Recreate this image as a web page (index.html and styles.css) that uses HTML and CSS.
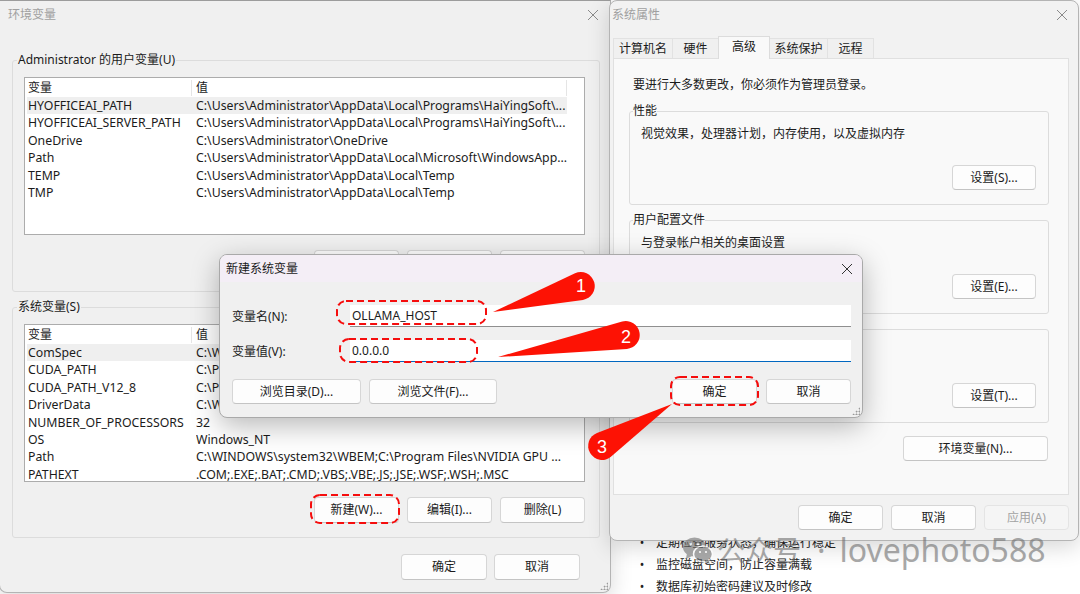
FILE: index.html
```html
<!DOCTYPE html>
<html lang="zh-CN">
<head>
  <meta charset="UTF-8">
  <title>环境变量</title>
  <link rel="stylesheet" href="styles.css">
</head>
<body>
  <!-- article text behind the windows -->
  <ul class="notes">
    <li>定期检查服务状态，确保运行稳定</li>
    <li>监控磁盘空间，防止容量满载</li>
    <li>数据库初始密码建议及时修改</li>
  </ul>

  <!-- 环境变量 -->
  <div class="win env-win">
    <div class="titlebar">
      <span>环境变量</span>
      <svg class="x" viewBox="0 0 10 10"><path d="M0 0L10 10M10 0L0 10"/></svg>
    </div>
    <div class="env-body">
      <div class="group">
        <div class="group-title">Administrator 的用户变量(U)</div>
        <div class="varlist">
          <div class="varhead"><span class="c1">变量</span><span class="c2">值</span></div>
          <div class="row hot"><span class="c1">HYOFFICEAI_PATH</span><span class="c2">C:\Users\Administrator\AppData\Local\Programs\HaiYingSoft\...</span></div>
          <div class="row"><span class="c1">HYOFFICEAI_SERVER_PATH</span><span class="c2">C:\Users\Administrator\AppData\Local\Programs\HaiYingSoft\...</span></div>
          <div class="row"><span class="c1">OneDrive</span><span class="c2">C:\Users\Administrator\OneDrive</span></div>
          <div class="row"><span class="c1">Path</span><span class="c2">C:\Users\Administrator\AppData\Local\Microsoft\WindowsApp...</span></div>
          <div class="row"><span class="c1">TEMP</span><span class="c2">C:\Users\Administrator\AppData\Local\Temp</span></div>
          <div class="row"><span class="c1">TMP</span><span class="c2">C:\Users\Administrator\AppData\Local\Temp</span></div>
        </div>
        <div class="btnrow">
          <button class="btn">新建(N)...</button>
          <button class="btn">编辑(E)...</button>
          <button class="btn">删除(D)</button>
        </div>
      </div>

      <div class="group">
        <div class="group-title">系统变量(S)</div>
        <div class="varlist">
          <div class="varhead"><span class="c1">变量</span><span class="c2">值</span></div>
          <div class="row hot"><span class="c1">ComSpec</span><span class="c2">C:\WINDOWS\system32\cmd.exe</span></div>
          <div class="row"><span class="c1">CUDA_PATH</span><span class="c2">C:\Program Files\NVIDIA GPU Computing Toolkit\CUDA\v12.8</span></div>
          <div class="row"><span class="c1">CUDA_PATH_V12_8</span><span class="c2">C:\Program Files\NVIDIA GPU Computing Toolkit\CUDA\v12.8</span></div>
          <div class="row"><span class="c1">DriverData</span><span class="c2">C:\Windows\System32\Drivers\DriverData</span></div>
          <div class="row"><span class="c1">NUMBER_OF_PROCESSORS</span><span class="c2">32</span></div>
          <div class="row"><span class="c1">OS</span><span class="c2">Windows_NT</span></div>
          <div class="row"><span class="c1">Path</span><span class="c2">C:\WINDOWS\system32\WBEM;C:\Program Files\NVIDIA GPU ...</span></div>
          <div class="row"><span class="c1">PATHEXT</span><span class="c2">.COM;.EXE;.BAT;.CMD;.VBS;.VBE;.JS;.JSE;.WSF;.WSH;.MSC</span></div>
        </div>
        <div class="btnrow">
          <button class="btn">新建(W)...</button>
          <button class="btn">编辑(I)...</button>
          <button class="btn">删除(L)</button>
        </div>
      </div>

      <div class="btnrow foot">
        <button class="btn wide">确定</button>
        <button class="btn wide">取消</button>
      </div>
    </div>
    <div class="grip"></div>
  </div>

  <!-- 系统属性 -->
  <div class="win sys-win">
    <div class="titlebar">
      <span>系统属性</span>
      <svg class="x" viewBox="0 0 10 10"><path d="M0 0L10 10M10 0L0 10"/></svg>
    </div>
    <div class="tabs">
      <span class="tab" style="width:60px">计算机名</span>
      <span class="tab" style="width:47px">硬件</span>
      <span class="tab on" style="width:52px">高级</span>
      <span class="tab" style="width:59px">系统保护</span>
      <span class="tab" style="width:47px">远程</span>
    </div>
    <div class="panel">
      <div class="intro">要进行大多数更改，你必须作为管理员登录。</div>

      <div class="group">
        <div class="group-title">性能</div>
        <div class="desc">视觉效果，处理器计划，内存使用，以及虚拟内存</div>
        <div class="btnrow"><button class="btn">设置(S)...</button></div>
      </div>

      <div class="group">
        <div class="group-title">用户配置文件</div>
        <div class="desc">与登录帐户相关的桌面设置</div>
        <div class="btnrow"><button class="btn">设置(E)...</button></div>
      </div>

      <div class="group">
        <div class="group-title">启动和故障恢复</div>
        <div class="desc">系统启动、系统故障和调试信息</div>
        <div class="btnrow"><button class="btn">设置(T)...</button></div>
      </div>

      <div class="btnrow env-btn"><button class="btn">环境变量(N)...</button></div>
    </div>
    <div class="btnrow sys-foot">
      <button class="btn">确定</button>
      <button class="btn">取消</button>
      <button class="btn" disabled>应用(A)</button>
    </div>
  </div>

  <!-- 新建系统变量 -->
  <div class="win new-var">
    <div class="titlebar">
      <span>新建系统变量</span>
      <svg class="x" viewBox="0 0 10 10"><path d="M0 0L10 10M10 0L0 10"/></svg>
    </div>
    <div class="nv-body">
      <div class="field">
        <label>变量名(N):</label>
        <div class="input">OLLAMA_HOST</div>
      </div>
      <div class="field">
        <label>变量值(V):</label>
        <div class="input focus">0.0.0.0</div>
      </div>
      <div class="btnrow nv-btns">
        <button class="btn browse" style="width:129px">浏览目录(D)...</button>
        <button class="btn browse" style="width:128px">浏览文件(F)...</button>
        <button class="btn ok">确定</button>
        <button class="btn">取消</button>
      </div>
    </div>
    <div class="grip"></div>
  </div>

  <!-- 公众号 watermark -->
  <div class="mark">
    <svg class="wx" viewBox="0 0 30 28">
      <ellipse cx="11.5" cy="11" rx="11.5" ry="9.5"/>
      <path d="M4 17l-1 6 6-3z"/>
      <ellipse cx="20" cy="18" rx="9.5" ry="8" stroke="#fff" stroke-width="1.5"/>
      <path d="M25 24l2 4-5-2z"/>
      <circle cx="7.5" cy="8" r="1.4" fill="#fff"/>
      <circle cx="15" cy="8" r="1.4" fill="#fff"/>
      <circle cx="17" cy="16" r="1.1" fill="#fff"/>
      <circle cx="23" cy="16" r="1.1" fill="#fff"/>
    </svg>
    <span class="mark-cn">公众号</span>
    <span class="mark-dot">·</span>
    <span>lovephoto588</span>
  </div>

  <!-- step markers drawn over the windows -->
  <svg class="marks" viewBox="0 0 1080 594">
    <g class="dash">
      <rect x="337" y="301" width="149" height="23" rx="9"/>
      <rect x="340" y="339" width="137" height="23" rx="9"/>
      <rect x="671" y="377" width="87" height="28" rx="9"/>
      <rect x="311" y="495" width="88" height="28" rx="9"/>
    </g>
    <g class="bubble">
      <path d="M493 312L575 273.3A14 14 0 1 1 582.9 299.9Z"/>
      <path d="M498 357L622.2 321.5A14 14 0 1 1 626.9 349Z"/>
      <path d="M672 404L611.2 456.6A14 14 0 1 1 597 432.9Z"/>
      <text x="581" y="292">1</text>
      <text x="626" y="343">2</text>
      <text x="602" y="453">3</text>
    </g>
  </svg>
</body>
</html>
```

FILE: styles.css
```css
* {
  box-sizing: border-box;
}

body {
  margin: 0;
  width: 1080px;
  height: 594px;
  position: relative;
  overflow: hidden;
  background: #fff;
  font-family: "Noto Sans", "Noto Sans CJK SC", sans-serif;
  font-size: 12px;
  line-height: 16px;
  color: #1b1b1b;
}

button {
  font: inherit;
  color: inherit;
}

/* page text under the windows */
.notes {
  position: absolute;
  left: 634px;
  top: 532px;
  margin: 0;
  padding: 0;
  list-style: none;
  color: #222;
  line-height: 22px;
}

.notes li::before {
  content: "•";
  display: inline-block;
  width: 16px;
  margin-right: 6px;
  text-align: center;
}

/* windows */
.win {
  position: absolute;
  background: #f0f0f0;
  border: 1px solid #b4b4b4;
  box-shadow: 0 6px 22px rgba(0, 0, 0, 0.16);
}

.titlebar {
  height: 27px;
  display: flex;
  align-items: center;
  justify-content: space-between;
  color: #a0a0a0;
}

.x {
  width: 10px;
  height: 10px;
  stroke: #8a8a8a;
  stroke-width: 1;
  fill: none;
}

.btnrow {
  display: flex;
  justify-content: flex-end;
  gap: 8px;
}

.btn {
  width: 85px;
  height: 26px;
  padding: 0;
  background: #fdfdfd;
  border: 1px solid #d6d6d6;
  border-bottom-color: #c4c4c4;
  border-radius: 4px;
  line-height: 22px;
  text-align: center;
  white-space: nowrap;
}

.btn[disabled] {
  background: #f5f5f5;
  border-color: #e4e4e4;
  color: #a3a3a3;
}

.group {
  border: 1px solid #dcdcdc;
  border-radius: 3px;
}

.group-title {
  width: fit-content;
  height: 16px;
  margin-top: -9px;
  background: #f0f0f0;
}

.grip {
  position: absolute;
  right: 2px;
  bottom: 2px;
  width: 8px;
  height: 8px;
  background: radial-gradient(circle, #9a9a9a 0.8px, transparent 1.2px) 0 0 / 3px 3px;
  clip-path: polygon(100% 0, 100% 100%, 0 100%);
}

/* 环境变量 */
.env-win {
  left: -1px;
  top: 0;
  width: 612px;
  height: 593px;
  border-radius: 0 0 8px 8px;
  border-top-color: #9c9c9c;
  z-index: 1;
}

.env-win .titlebar {
  padding: 0 12px 0 8px;
}

.env-body {
  padding: 32px 10px 0 12px;
}

.env-body .group {
  padding: 0 14px 14px 11px;
  margin-bottom: 15px;
}

.env-body .group:first-child {
  padding-bottom: 15px;
}

.env-body .group-title {
  margin-left: -7px;
  padding: 0 1px;
}

.varlist {
  height: 158px;
  margin-top: 9px;
  background: #fff;
  border: 1px solid #acacac;
  overflow: hidden;
}

.varhead,
.row {
  display: flex;
  margin: 0 17px 0 2px;
  white-space: nowrap;
}

.varhead {
  height: 19px;
  align-items: center;
}

.varhead .c1 {
  width: 165px;
  padding-left: 1px;
  border-right: 1px solid #e5e5e5;
}

.varhead .c2 {
  flex: 1;
  padding-left: 4px;
  border-right: 1px solid #e5e5e5;
}

.row {
  height: 17.4px;
  line-height: 17.4px;
  font-size: 12.3px;
}

.row.hot {
  background: #efefef;
}

.row .c1 {
  width: 169px;
  padding-left: 1px;
  flex-shrink: 0;
}

.row .c2 {
  flex: 1;
  overflow: hidden;
}

.env-body .btnrow {
  margin-top: 15px;
}

.env-body .foot {
  margin: 16px 20px 0 0;
  gap: 7px;
}

.btn.wide {
  width: 86px;
}

/* 系统属性 */
.sys-win {
  left: 609px;
  top: 0;
  width: 470px;
  height: 541px;
  border-radius: 8px;
  background: #f2f2f2;
  padding: 0 9px 0 3px;
  z-index: 2;
}

.sys-win .titlebar {
  margin: 0 -9px 0 -3px;
  padding: 0 11px 0 2px;
}

.tabs {
  display: flex;
  align-items: flex-end;
  height: 22px;
  margin-top: 8px;
}

.tab {
  height: 20px;
  line-height: 20px;
  text-align: center;
  background: #f0f0f0;
  border: 1px solid #e2e2e2;
  border-bottom: none;
  margin-right: -1px;
}

.tab.on {
  height: 23px;
  line-height: 19px;
  background: #f9f9f9;
  border-color: #dcdcdc;
  position: relative;
  z-index: 1;
  margin-bottom: -1px;
}

.panel {
  width: 456px;
  height: 437px;
  background: #f9f9f9;
  border: 1px solid #e0e0e0;
  padding: 18px 19px 0 15px;
}

.intro {
  margin-left: 4px;
}

.panel .group {
  margin-top: 15px;
  padding: 0 12px 14px 11px;
}

.intro + .group {
  margin-top: 18px;
}

.panel .group-title {
  margin-left: -8px;
  background: #f9f9f9;
}

.desc {
  margin-top: 7px;
}

.panel .group .btnrow {
  margin-top: 23px;
}

.panel .btn {
  width: 84px;
  height: 25px;
}

.env-btn {
  margin-top: 13px;
}

.panel .env-btn .btn {
  width: 145px;
  margin-right: 1px;
}

.sys-foot {
  margin-top: 10px;
}

.sys-foot .btn {
  height: 25px;
}

/* 新建系统变量 */
.new-var {
  left: 219px;
  top: 254px;
  width: 644px;
  height: 164px;
  border-radius: 8px;
  border-color: #a9a9a9;
  overflow: hidden;
  box-shadow: 0 8px 28px rgba(0, 0, 0, 0.28);
  z-index: 3;
}

.new-var .titlebar {
  background: #f4eef6;
  color: #1b1b1b;
  padding: 0 10px 0 6px;
}

.new-var .x {
  stroke: #333;
}

.nv-body {
  padding: 23px 11px 0 12px;
}

.field {
  display: flex;
  align-items: center;
  height: 22px;
  margin-bottom: 13px;
}

.field label {
  width: 118px;
  flex-shrink: 0;
  padding-top: 2px;
}

.input {
  flex: 1;
  height: 22px;
  line-height: 22px;
  padding-left: 2px;
  background: #fff;
  border-bottom: 1px solid #8f8f8f;
}

.input.focus {
  border-bottom-color: #0067c0;
}

.nv-btns {
  margin-top: 17px;
  justify-content: flex-start;
}

.nv-btns .btn {
  height: 25px;
}

.nv-btns .ok {
  margin-left: auto;
  margin-right: 1px;
}

/* watermark */
.mark {
  position: absolute;
  left: 683px;
  top: 532px;
  display: flex;
  align-items: center;
  height: 36px;
  color: #6f6f6f;
  opacity: 0.6;
  font-size: 32px;
  line-height: 36px;
  z-index: 4;
}

.wx {
  width: 30px;
  height: 28px;
  fill: #6f6f6f;
  margin-right: 4px;
}

.mark-cn {
  font-size: 28px;
}

.mark-dot {
  margin: 0 14px 0 16px;
}

/* annotations */
.marks {
  position: absolute;
  left: 0;
  top: 0;
  width: 1080px;
  height: 594px;
  pointer-events: none;
  z-index: 5;
}

.dash rect {
  fill: none;
  stroke: #f50d0d;
  stroke-width: 2;
  stroke-dasharray: 7 4;
}

.bubble path {
  fill: #fd1204;
}

.bubble text {
  fill: #fff;
  font-family: "Liberation Sans", sans-serif;
  font-size: 18px;
  text-anchor: middle;
}
```
